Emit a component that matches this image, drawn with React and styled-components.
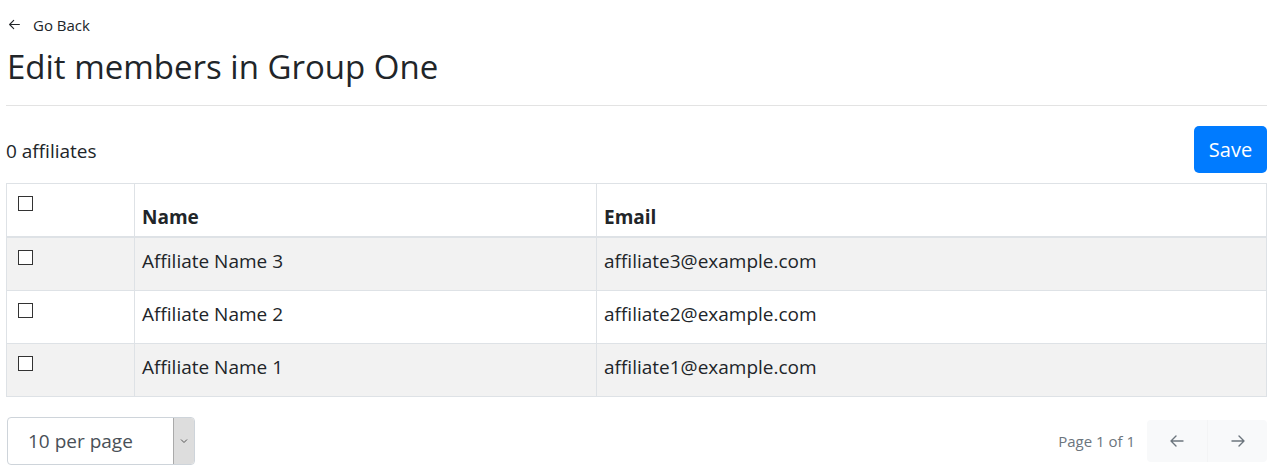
import React from "react";
import styled, { createGlobalStyle } from "styled-components";

const Global = createGlobalStyle`
  body {
    margin: 0;
    font-family: "Open Sans", "Noto Sans", "Liberation Sans", sans-serif;
    color: #212529;
    background: #fff;
  }
`;

const Page = styled.div`
  padding: 14px 7px 0 6px;
`;

const BackLink = styled.a`
  display: inline-flex;
  align-items: center;
  gap: 12px;
  font-size: 15px;
  color: #212529;
  margin-left: 2px;
  svg {
    width: 13px;
    height: 13px;
  }
`;

const Title = styled.h2`
  font-size: 33px;
  font-weight: 400;
  margin: 11px 0 0 1px;
  line-height: 1.2;
`;

const Rule = styled.hr`
  border: 0;
  border-top: 1px solid #e3e3e3;
  margin: 18px 0 20px;
`;

const Toolbar = styled.div`
  display: flex;
  justify-content: space-between;
  align-items: center;
  margin-bottom: 10px;
`;

const Count = styled.span`
  font-size: 19px;
  margin-top: 4px;
`;

const SaveButton = styled.button`
  background: #007bff;
  color: #fff;
  border: 0;
  border-radius: 5px;
  font: inherit;
  font-size: 20px;
  width: 73px;
  height: 47px;
`;

const Table = styled.table`
  width: 100%;
  border-collapse: collapse;
  border: 1px solid #dee2e6;
  font-size: 19px;
  th, td {
    border: 1px solid #dee2e6;
    padding: 12px 7px;
    text-align: left;
  }
  th {
    vertical-align: bottom;
    font-weight: 700;
    height: 34px;
    border-bottom: 2px solid #dee2e6;
    padding-bottom: 6px;
  }
  td {
    line-height: 27px;
    padding-top: 10px;
    padding-bottom: 15px;
    vertical-align: middle;
  }
  tbody tr:nth-child(odd) {
    background: #f2f2f2;
  }
`;

const CheckCell = styled.td`
  width: 109px;
  && {
    vertical-align: top;
    padding-top: 12px;
    padding-left: 11px;
  }
`;

const CheckHead = styled.th`
  width: 109px;
  && {
    vertical-align: top;
    padding-top: 12px;
    padding-left: 11px;
  }
`;

const Box = styled.span`
  display: block;
  width: 13px;
  height: 13px;
  border: 1px solid #333;
  background: #fff;
`;

const Footer = styled.div`
  display: flex;
  justify-content: space-between;
  align-items: center;
  margin-top: 20px;
`;

const Select = styled.div`
  display: flex;
  width: 186px;
  height: 46px;
  border: 1px solid #ced4da;
  border-radius: 4px;
  overflow: hidden;
  margin-left: 1px;
`;

const SelectText = styled.div`
  flex: 1;
  display: flex;
  align-items: center;
  padding-left: 20px;
  font-size: 19px;
  color: #495057;
`;

const SelectArrow = styled.div`
  width: 20px;
  background: #dddddd;
  border-left: 1px solid #aaa;
  display: flex;
  align-items: center;
  justify-content: center;
  svg {
    width: 8px;
    height: 8px;
  }
`;

const Pager = styled.div`
  display: flex;
  align-items: center;
  gap: 12px;
`;

const PageInfo = styled.span`
  font-size: 15px;
  color: #6c757d;
`;

const PagerButtons = styled.div`
  display: flex;
  background: #f8f9fa;
  border-radius: 4px;
  height: 42px;
`;

const PagerButton = styled.button`
  width: 60px;
  border: 0;
  background: transparent;
  color: #6c757d;
  display: flex;
  align-items: center;
  justify-content: center;
  & + & {
    border-left: 1px solid #f3f4f5;
  }
  svg {
    width: 16px;
    height: 16px;
  }
`;

const Arrow = ({ dir }) => (
  <svg viewBox="0 0 16 16" fill="none" stroke="currentColor" strokeWidth="1.4" strokeLinecap="round" strokeLinejoin="round">
    {dir === "left" ? (
      <path d="M14 8H2M7 3L2 8l5 5" />
    ) : (
      <path d="M2 8h12M9 3l5 5-5 5" />
    )}
  </svg>
);

const rows = [3, 2, 1];

export default function App() {
  return (
    <Page>
      <Global />
      <BackLink>
        <Arrow dir="left" />
        Go Back
      </BackLink>
      <Title>Edit members in Group One</Title>
      <Rule />
      <Toolbar>
        <Count>0 affiliates</Count>
        <SaveButton>Save</SaveButton>
      </Toolbar>
      <Table>
        <thead>
          <tr>
            <CheckHead>
              <Box />
            </CheckHead>
            <th style={{ width: 447 }}>Name</th>
            <th>Email</th>
          </tr>
        </thead>
        <tbody>
          {rows.map((n) => (
            <tr key={n}>
              <CheckCell>
                <Box />
              </CheckCell>
              <td>Affiliate Name {n}</td>
              <td>affiliate{n}@example.com</td>
            </tr>
          ))}
        </tbody>
      </Table>
      <Footer>
        <Select>
          <SelectText>10 per page</SelectText>
          <SelectArrow>
            <svg viewBox="0 0 8 8" fill="none" stroke="#555" strokeWidth="1">
              <path d="M1 2.5l3 3 3-3" />
            </svg>
          </SelectArrow>
        </Select>
        <Pager>
          <PageInfo>Page 1 of 1</PageInfo>
          <PagerButtons>
            <PagerButton>
              <Arrow dir="left" />
            </PagerButton>
            <PagerButton>
              <Arrow dir="right" />
            </PagerButton>
          </PagerButtons>
        </Pager>
      </Footer>
    </Page>
  );
}
